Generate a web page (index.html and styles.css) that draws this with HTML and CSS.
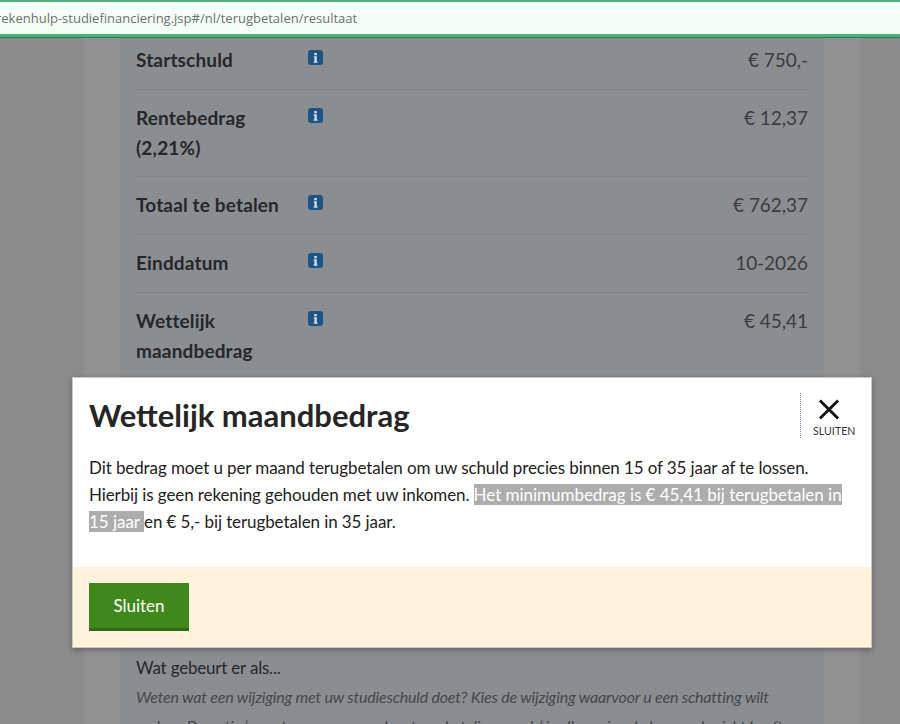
FILE: index.html
```html
<!DOCTYPE html>
<html lang="nl">
<head>
<meta charset="utf-8">
<title>Rekenhulp studiefinanciering</title>
<link rel="stylesheet" href="styles.css">
</head>
<body>
<div class="addressbar"><span class="url">rekenhulp-studiefinanciering.jsp#/nl/terugbetalen/resultaat</span></div>
<main class="page">
  <div class="column">
    <div class="panel">
      <div class="row"><div class="label">Startschuld</div><div class="info"><svg viewBox="0 0 15 15" width="15" height="15"><rect width="15" height="15" rx="3" fill="#1c5485"/><path d="M6.2 3h2.6v2.2H6.2zM5.7 6.3h3.1v5.2h.8v1.2H5.7v-1.2h.7V7.5h-.7z" fill="#d5dde3"/></svg></div><div class="value">€ 750,-</div></div>
      <div class="row"><div class="label">Rentebedrag (2,21%)</div><div class="info"><svg viewBox="0 0 15 15" width="15" height="15"><rect width="15" height="15" rx="3" fill="#1c5485"/><path d="M6.2 3h2.6v2.2H6.2zM5.7 6.3h3.1v5.2h.8v1.2H5.7v-1.2h.7V7.5h-.7z" fill="#d5dde3"/></svg></div><div class="value">€ 12,37</div></div>
      <div class="row"><div class="label">Totaal te betalen</div><div class="info"><svg viewBox="0 0 15 15" width="15" height="15"><rect width="15" height="15" rx="3" fill="#1c5485"/><path d="M6.2 3h2.6v2.2H6.2zM5.7 6.3h3.1v5.2h.8v1.2H5.7v-1.2h.7V7.5h-.7z" fill="#d5dde3"/></svg></div><div class="value">€ 762,37</div></div>
      <div class="row"><div class="label">Einddatum</div><div class="info"><svg viewBox="0 0 15 15" width="15" height="15"><rect width="15" height="15" rx="3" fill="#1c5485"/><path d="M6.2 3h2.6v2.2H6.2zM5.7 6.3h3.1v5.2h.8v1.2H5.7v-1.2h.7V7.5h-.7z" fill="#d5dde3"/></svg></div><div class="value">10-2026</div></div>
      <div class="row"><div class="label">Wettelijk maandbedrag</div><div class="info"><svg viewBox="0 0 15 15" width="15" height="15"><rect width="15" height="15" rx="3" fill="#1c5485"/><path d="M6.2 3h2.6v2.2H6.2zM5.7 6.3h3.1v5.2h.8v1.2H5.7v-1.2h.7V7.5h-.7z" fill="#d5dde3"/></svg></div><div class="value">€ 45,41</div></div>
      <div class="spacer"></div>
      <h2 class="whatif">Wat gebeurt er als...</h2>
      <p class="intro">Weten wat een wijziging met uw studieschuld doet? Kies de wijziging waarvoor u een schatting wilt maken. De optie ‘overstappen naar andere terugbetalingsregels’ is alleen zinvol als u een bericht heeft</p>
    </div>
  </div>
</main>
<section class="modal">
  <div class="modal-body">
    <div class="modal-head">
      <h1 class="modal-title">Wettelijk maandbedrag</h1>
      <div class="close"><svg class="close-x" viewBox="0 0 22 22" width="22" height="22"><path d="M1.5 1.5 20.5 20.5M20.5 1.5 1.5 20.5" stroke="#111" stroke-width="3" fill="none"/></svg><span class="close-label">SLUITEN</span></div>
    </div>
    <p class="modal-text">Dit bedrag moet u per maand terugbetalen om uw schuld precies binnen 15 of 35 jaar af te lossen. Hierbij is geen rekening gehouden met uw inkomen. <mark class="selected">Het minimumbedrag is € 45,41 bij terugbetalen in 15 jaar </mark>en € 5,- bij terugbetalen in 35 jaar.</p>
  </div>
  <div class="modal-foot"><button class="btn">Sluiten</button></div>
</section>
</body>
</html>
```
FILE: styles.css
```css
* { box-sizing: border-box; }
html, body { margin: 0; height: 724px; overflow: hidden; }
body { font-family: "Lato", "Noto Sans", sans-serif; background: #8c8c8c; color: #2a2a2a; position: relative; }
.addressbar { height: 38px; background: #f4fff8; border-top: 2px solid #4fae7c; border-bottom: 1px solid #0e8a4a; box-shadow: inset 0 -3px 0 #4fae7c; overflow: hidden; display: flex; align-items: center; padding-bottom: 3px; }
.url { font-family: "Open Sans", sans-serif; font-size: 13px; color: #6f6f6f; white-space: nowrap; margin-left: -4px; }
.page { height: 686px; overflow: hidden; padding-left: 84px; }
.column { width: 776px; height: 100%; background: #919191; padding: 0 36px; }
.panel { background: #8b8e90; height: 100%; padding: 7px 16px 0; }
.row { display: flex; padding: 0 0 14px; margin-bottom: 13.2px; border-bottom: 1px solid #81858a; font-size: 19px; line-height: 29.7px; }
.row:nth-child(5) { border-bottom: 0; }
.label { width: 172px; font-weight: 700; color: #25272a; padding-right: 20px; letter-spacing: .15px; }
.info { width: 15px; height: 15px; margin-top: 5px; }
.info svg { display: block; }
.value { flex: 1; text-align: right; color: #3a3c3e; letter-spacing: -0.05px; }
.spacer { height: 261px; }
.whatif { margin: 0; font-size: 17px; line-height: 28px; font-weight: 400; color: #25272a; letter-spacing: -0.2px; }
.intro { margin: 0; font-size: 16px; line-height: 29px; font-style: italic; color: #45474a; letter-spacing: -0.2px; }
.modal { position: absolute; left: 72px; top: 377px; width: 800px; height: 271px; background: #fff; border: 1px solid #c8c8c8; box-shadow: 0 2px 6px rgba(0,0,0,.3); display: flex; flex-direction: column; }
.modal-body { flex: 1; padding: 0 16px 0 16px; }
.modal-head { display: flex; justify-content: space-between; align-items: flex-start; padding-top: 15px; }
.modal-title { margin: 2px 0 0; font-size: 31px; line-height: 40px; font-weight: 700; color: #262626; }
.close { width: 55px; height: 45px; border-left: 1px dotted #888; display: flex; flex-direction: column; align-items: flex-start; padding-left: 12px; }
.close-x { margin: 6px 0 0 5px; }
.close-label { font-size: 10.5px; line-height: 14px; color: #333; letter-spacing: .1px; margin-top: 4px; white-space: nowrap; }
.modal-text { margin: 16px 0 0; font-size: 17px; line-height: 27px; color: #222; letter-spacing: -0.1px; }
.selected { background: #adadad; color: #fff; letter-spacing: -0.03px; }
.modal-foot { height: 80px; background: #fff3dc; padding: 16px 16px; }
.btn { display: block; width: 100px; height: 48px; background: #3f881c; border: 0; border-bottom: 3px solid #326c16; color: #fff; font: 400 17px "Lato", sans-serif; padding: 0; }
```
